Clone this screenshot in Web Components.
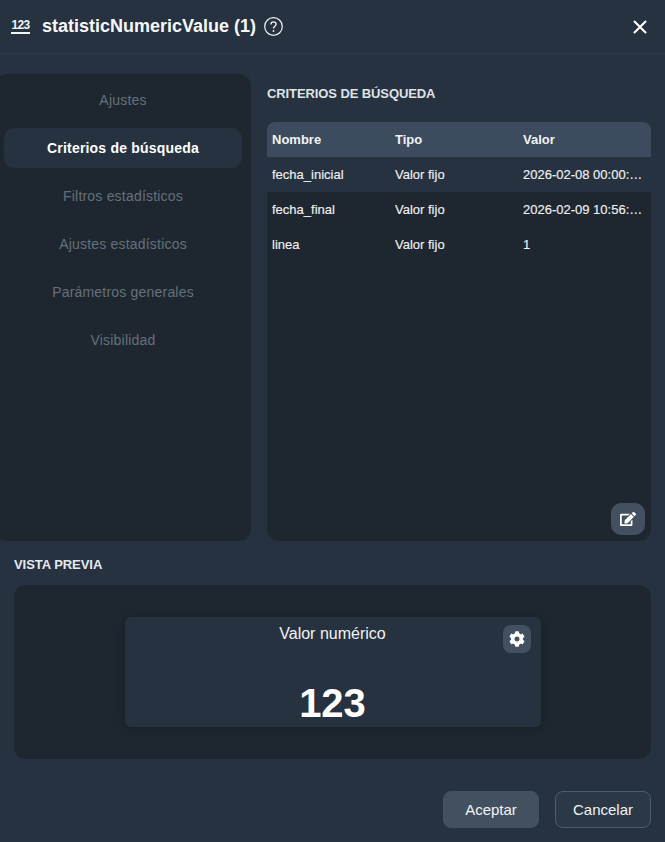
<!DOCTYPE html>
<html lang="es">
<head>
<meta charset="utf-8">
<title>statisticNumericValue</title>
<style>
  html, body { margin: 0; height: 100%; background: #273240; overflow: hidden; }
  body { font-family: "Liberation Sans", Arial, sans-serif; color: #fff; }
</style>
</head>
<body>
<widget-dialog>
  <dialog-header slot="header" heading="statisticNumericValue (1)"></dialog-header>
  <side-nav slot="nav" active="1"></side-nav>
  <criteria-panel slot="panel"></criteria-panel>
  <preview-section slot="preview"></preview-section>
  <action-button slot="actions" variant="primary">Aceptar</action-button>
  <action-button slot="actions">Cancelar</action-button>
</widget-dialog>

<script>
class WidgetDialog extends HTMLElement {
  constructor() {
    super();
    this.attachShadow({ mode: 'open' });
    this.shadowRoot.innerHTML = `
      <style>
        :host { display: flex; flex-direction: column; width: 665px; height: 842px; background: #273240; }
        .body { display: flex; gap: 16px; padding: 20px 14px 0 0; height: 467px; margin-left: -5px; }
        .preview { display: block; padding: 0 14px; }
        .actions { display: flex; justify-content: flex-end; gap: 16px; padding: 32px 14px 0; }
      </style>
      <slot name="header"></slot>
      <div class="body">
        <slot name="nav"></slot>
        <slot name="panel"></slot>
      </div>
      <div class="preview"><slot name="preview"></slot></div>
      <div class="actions"><slot name="actions"></slot></div>
    `;
  }
}
customElements.define('widget-dialog', WidgetDialog);

class DialogHeader extends HTMLElement {
  constructor() {
    super();
    this.attachShadow({ mode: 'open' });
    this.shadowRoot.innerHTML = `
      <style>
        :host { display: flex; align-items: center; height: 53px; padding: 0 18px 0 11px; border-bottom: 1px solid #2f3a48; }
        .type { font-size: 12px; font-weight: 700; line-height: 11px; width: 19px; border-bottom: 2px solid #f1f3f5; padding-bottom: 1px; text-align: center; letter-spacing: -0.6px; color: #f1f3f5; margin: 0 12px 0 0; }
        h1 { margin: 0; font-size: 18px; font-weight: 700; color: #f7f8f9; }
        .help { margin-left: 8px; display: block; }
        .close { margin-left: auto; display: block; }
      </style>
      <span class="type">123</span>
      <h1>${this.getAttribute('heading')}</h1>
      <svg class="help" width="19" height="19" viewBox="0 0 19 19" fill="none" stroke="#f1f3f5" stroke-width="1.2">
        <circle cx="9.5" cy="9.5" r="8.8"/>
        <path d="M6.9 7.4c0-1.6 1.2-2.5 2.6-2.5s2.6.9 2.6 2.3c0 2-2.6 2.2-2.6 4.3" stroke-width="1.3"/>
        <circle cx="9.5" cy="14" r=".9" fill="#f1f3f5" stroke="none"/>
      </svg>
      <svg class="close" width="14" height="14" viewBox="0 0 14 14" stroke="#fff" stroke-width="2" stroke-linecap="round">
        <path d="M1.5 1.5l11 11M12.5 1.5l-11 11"/>
      </svg>
    `;
  }
}
customElements.define('dialog-header', DialogHeader);

class SideNav extends HTMLElement {
  constructor() {
    super();
    this.attachShadow({ mode: 'open' });
    const items = ['Ajustes', 'Criterios de búsqueda', 'Filtros estadísticos', 'Ajustes estadísticos', 'Parámetros generales', 'Visibilidad'];
    const active = Number(this.getAttribute('active'));
    this.shadowRoot.innerHTML = `
      <style>
        :host { display: flex; flex-direction: column; flex: none; width: 256px; box-sizing: border-box; padding: 6px 9px 0; gap: 8px; background: #1e2730; border-radius: 12px; }
        div { height: 40px; line-height: 40px; text-align: center; font-size: 14px; letter-spacing: 0.2px; color: #65707b; border-radius: 10px; }
        .on { background: #273240; color: #fff; font-weight: 700; letter-spacing: 0.2px; }
      </style>
      ${items.map((t, i) => `<div class="${i === active ? 'on' : ''}">${t}</div>`).join('')}
    `;
  }
}
customElements.define('side-nav', SideNav);

class CriteriaPanel extends HTMLElement {
  constructor() {
    super();
    this.attachShadow({ mode: 'open' });
    const rows = [
      ['fecha_inicial', 'Valor fijo', '2026-02-08 00:00:00'],
      ['fecha_final', 'Valor fijo', '2026-02-09 10:56:00'],
      ['linea', 'Valor fijo', '1']
    ];
    this.shadowRoot.innerHTML = `
      <style>
        :host { display: flex; flex-direction: column; flex: 1; min-width: 0; }
        h2 { margin: 0; height: 48px; line-height: 40px; font-size: 13px; font-weight: 700; color: #dfe3e7; letter-spacing: -0.1px; }
        .box { flex: 1; display: flex; flex-direction: column; background: #1e2730; border-radius: 8px 8px 12px 12px; overflow: hidden; }
        .row { display: grid; grid-template-columns: 123px 128px 120px; height: 35px; align-items: center; padding: 0 8px 0 5px; font-size: 13px; color: #eef0f2; -webkit-text-stroke: 0.15px #eef0f2; }
        .head { background: #3d4b5e; font-weight: 700; color: #f1f3f5; -webkit-text-stroke: 0; }
        .alt { background: #273240; }
        span { white-space: nowrap; overflow: hidden; text-overflow: ellipsis; }
        .foot { margin-top: auto; display: flex; justify-content: flex-end; padding: 6px; }
      </style>
      <h2>CRITERIOS DE BÚSQUEDA</h2>
      <div class="box">
        <div class="row head"><span>Nombre</span><span>Tipo</span><span>Valor</span></div>
        ${rows.map((r, i) => `<div class="row ${i === 0 ? 'alt' : ''}"><span>${r[0]}</span><span>${r[1]}</span><span>${r[2]}</span></div>`).join('')}
        <div class="foot">
          <icon-button size="34" radius="10">
            <svg width="16" height="16" viewBox="0 0 576 512" fill="#fff"><path d="M402.6 83.2l90.2 90.2c3.8 3.8 3.8 10 0 13.8L274.4 405.6l-92.8 10.3c-12.4 1.4-22.9-9.1-21.5-21.5l10.3-92.8L388.8 83.2c3.8-3.8 10-3.8 13.8 0zm162-22.9l-48.8-48.8c-15.2-15.2-39.9-15.2-55.2 0l-35.4 35.4c-3.8 3.8-3.8 10 0 13.8l90.2 90.2c3.8 3.8 10 3.8 13.8 0l35.4-35.4c15.2-15.3 15.2-40 0-55.2zM384 346.2V448H64V128h229.8c3.2 0 6.2-1.3 8.5-3.5l40-40c7.6-7.6 2.2-20.5-8.5-20.5H48C21.5 64 0 85.5 0 112v352c0 26.5 21.5 48 48 48h352c26.5 0 48-21.5 48-48V306.2c0-10.7-12.9-16-20.5-8.5l-40 40c-2.2 2.3-3.5 5.3-3.5 8.5z"/></svg>
          </icon-button>
        </div>
      </div>
    `;
  }
}
customElements.define('criteria-panel', CriteriaPanel);

class IconButton extends HTMLElement {
  constructor() {
    super();
    this.attachShadow({ mode: 'open' });
    const size = this.getAttribute('size') || 28;
    const radius = this.getAttribute('radius') || 8;
    this.shadowRoot.innerHTML = `
      <style>
        :host { display: flex; align-items: center; justify-content: center; width: ${size}px; height: ${size === '34' ? 32 : size}px; background: #435060; border-radius: ${radius}px; }
      </style>
      <slot></slot>
    `;
  }
}
customElements.define('icon-button', IconButton);

class PreviewSection extends HTMLElement {
  constructor() {
    super();
    this.attachShadow({ mode: 'open' });
    this.shadowRoot.innerHTML = `
      <style>
        :host { display: block; }
        h2 { margin: 0; height: 44px; line-height: 48px; font-size: 13px; font-weight: 700; color: #e6e9ec; letter-spacing: -0.05px; }
        .stage { height: 174px; box-sizing: border-box; padding-top: 32px; background: #1e2730; border-radius: 12px; }
      </style>
      <h2>VISTA PREVIA</h2>
      <div class="stage"><numeric-card label="Valor numérico" value="123"></numeric-card></div>
    `;
  }
}
customElements.define('preview-section', PreviewSection);

class NumericCard extends HTMLElement {
  constructor() {
    super();
    this.attachShadow({ mode: 'open' });
    this.shadowRoot.innerHTML = `
      <style>
        :host { display: flex; flex-direction: column; align-items: center; position: relative; width: 416px; height: 110px; margin: 0 auto; background: #273240; border-radius: 6px; box-shadow: 0 2px 12px rgba(0,0,0,.28); }
        .label { font-size: 16px; line-height: 18px; margin-top: 8px; color: #f1f3f5; }
        .value { font-size: 40px; font-weight: 700; line-height: 46px; margin-top: 37px; color: #fff; }
        icon-button { position: absolute; top: 8px; right: 10px; }
      </style>
      <div class="label">${this.getAttribute('label')}</div>
      <div class="value">${this.getAttribute('value')}</div>
      <icon-button size="28" radius="8">
        <svg width="16" height="16" viewBox="0 0 512 512" fill="#fff"><path d="M487.4 315.7l-42.6-24.6c4.3-23.2 4.3-47 0-70.2l42.6-24.6c4.9-2.8 7.1-8.6 5.5-14-11.1-35.6-30-67.8-54.7-94.6-3.8-4.1-10-5.1-14.8-2.3L380.8 110c-17.9-15.4-38.5-27.3-60.8-35.1V25.8c0-5.6-3.9-10.5-9.4-11.7-36.7-8.2-74.3-7.8-109.2 0-5.5 1.2-9.4 6.1-9.4 11.7V75c-22.2 7.9-42.8 19.8-60.8 35.1L88.7 85.5c-4.9-2.8-11-1.9-14.8 2.3-24.7 26.7-43.6 58.9-54.7 94.6-1.7 5.4.6 11.2 5.5 14L67.3 221c-4.3 23.2-4.3 47 0 70.2l-42.6 24.6c-4.9 2.8-7.1 8.6-5.5 14 11.1 35.6 30 67.8 54.7 94.6 3.8 4.1 10 5.1 14.8 2.3l42.6-24.6c17.9 15.4 38.5 27.3 60.8 35.1v49.2c0 5.6 3.9 10.5 9.4 11.7 36.7 8.2 74.3 7.8 109.2 0 5.5-1.2 9.4-6.1 9.4-11.7v-49.2c22.2-7.9 42.8-19.8 60.8-35.1l42.6 24.6c4.9 2.8 11 1.9 14.8-2.3 24.7-26.7 43.6-58.9 54.7-94.6 1.5-5.5-.7-11.3-5.6-14.1zM256 336c-44.1 0-80-35.9-80-80s35.9-80 80-80 80 35.9 80 80-35.9 80-80 80z"/></svg>
      </icon-button>
    `;
  }
}
customElements.define('numeric-card', NumericCard);

class ActionButton extends HTMLElement {
  constructor() {
    super();
    this.attachShadow({ mode: 'open' });
    this.shadowRoot.innerHTML = `
      <style>
        :host { display: flex; align-items: center; justify-content: center; box-sizing: border-box; width: 96px; height: 37px; padding-bottom: 1px; border-radius: 8px; font-size: 15px; color: #f1f3f5; background: #2b3846; border: 1px solid #4f5c6b; }
        :host([variant="primary"]) { background: #435060; border-color: #435060; }
      </style>
      <slot></slot>
    `;
  }
}
customElements.define('action-button', ActionButton);
</script>
</body>
</html>
